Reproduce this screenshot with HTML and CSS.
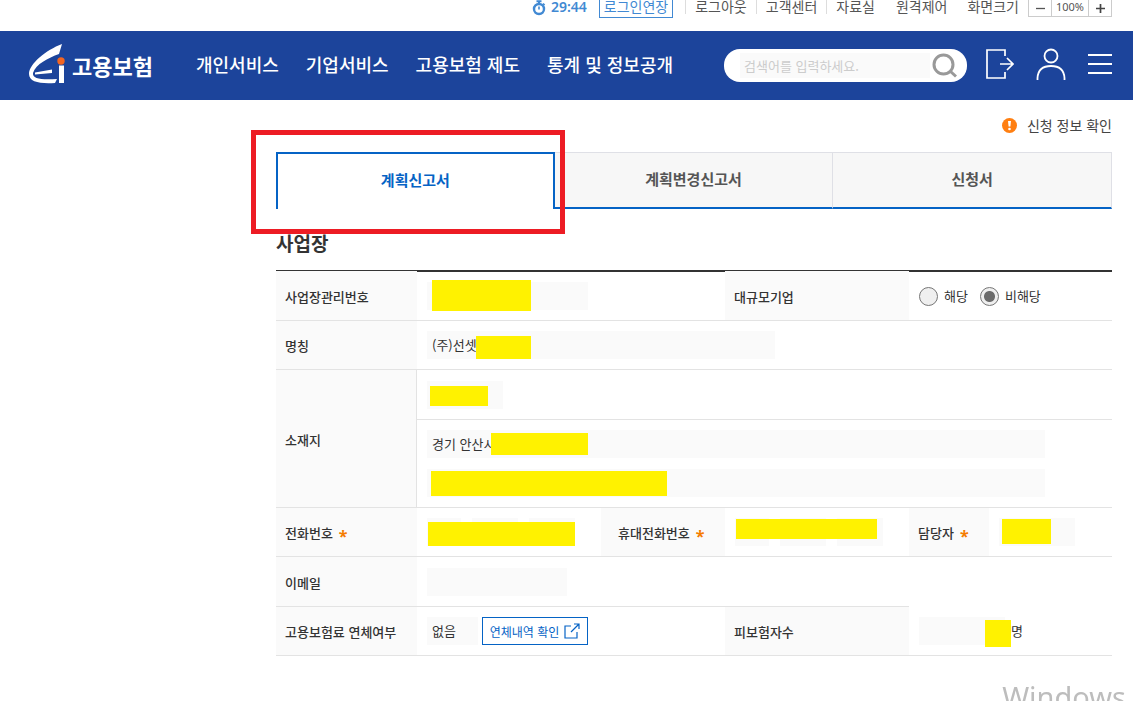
FILE: index.html
```html
<!DOCTYPE html>
<html lang="ko">
<head>
<meta charset="utf-8">
<meta name="viewport" content="width=device-width, initial-scale=1">
<title>고용보험 - 계획신고서</title>
<link rel="stylesheet" href="styles.css">
</head>
<body>
<div class="utility">
  <span class="timer">
    <svg width="14" height="16" viewBox="0 0 14 16" aria-hidden="true"><g fill="none" stroke="currentColor"><circle cx="7" cy="9" r="5" stroke-width="2.4"/><path d="M4.5 1.2h5M7 1v3" stroke-width="2"/><path d="M11 3.5l1.6 1.6" stroke-width="1.6"/><path d="M7 6.5V9.5" stroke-width="1.6"/></g></svg>
    29:44
  </span>
  <button type="button" class="extend">로그인연장</button>
  <ul class="utility-links">
    <li class="divided"><a href="#">로그아웃</a></li>
    <li class="divided"><a href="#">고객센터</a></li>
    <li class="divided"><a href="#">자료실</a></li>
    <li><a href="#">원격제어</a></li>
  </ul>
  <span class="size-label">화면크기</span>
  <div class="size-group">
    <button type="button" aria-label="축소"><svg width="9" height="9" viewBox="0 0 9 9"><path d="M0 4.5h9" stroke="#555" stroke-width="1.3"/></svg></button>
    <output>100%</output>
    <button type="button" aria-label="확대"><svg width="9" height="9" viewBox="0 0 9 9"><path d="M0 4.5h9M4.5 0v9" stroke="#444" stroke-width="1.7"/></svg></button>
  </div>
</div>

<header class="header">
  <a href="#" class="logo">
    <svg width="38" height="40" viewBox="0 0 38 40" aria-hidden="true">
      <path d="M34 0L31 10C20 14 8 20 5 29C4 35 14 36 29 35L27 39C12 40 1 38 1 30C1 20 18 6 34 0Z" fill="#fff"/>
      <path d="M7 28.500L24 25.500L24 29L7 30.500Z" fill="#fff"/>
      <path d="M31 21.500h5V39h-5z" fill="#fff"/>
      <circle cx="33" cy="17" r="3.700" fill="#f26522"/>
    </svg>
    <span>고용보험</span>
  </a>
  <nav class="nav">
    <a href="#">개인서비스</a>
    <a href="#">기업서비스</a>
    <a href="#">고용보험 제도</a>
    <a href="#">통계 및 정보공개</a>
  </nav>
  <form class="search">
    <input type="text" placeholder="검색어를 입력하세요." aria-label="검색어">
    <button type="button" aria-label="검색"><svg width="26" height="26" viewBox="0 0 26 26"><g fill="none" stroke="#999" stroke-width="3"><circle cx="11.500" cy="11.500" r="9.500"/><path d="M18 18l6 5.500"/></g></svg></button>
  </form>
  <div class="header-icons">
    <button type="button" aria-label="로그아웃"><svg width="28" height="30" viewBox="0 0 28 30"><path d="M19 7V1H1v28h18v-6M14 15h13M21 9l6 6-6 6" fill="none" stroke="#fff" stroke-width="1.700"/></svg></button>
    <button type="button" aria-label="마이페이지"><svg width="30" height="32" viewBox="0 0 30 32"><g fill="none" stroke="#fff" stroke-width="1.800"><circle cx="15" cy="8" r="6.500"/><path d="M1.500 32v-2C2 22 7 18 15 18s13 4 13.500 12v2"/></g></svg></button>
    <button type="button" aria-label="전체메뉴"><svg width="24" height="22" viewBox="0 0 24 22"><path d="M0 2h24M0 11h24M0 20h24" stroke="#fff" stroke-width="2"/></svg></button>
  </div>
</header>

<main class="content">
  <p class="notice">
    <svg width="15" height="15" viewBox="0 0 15 15" aria-hidden="true"><circle cx="7.500" cy="7.500" r="7.500" fill="#ff7f11"/><path d="M6 3h3l-.6 5.500H6.600z" fill="#fff"/><circle cx="7.500" cy="11" r="1.300" fill="#fff"/></svg>
    <a href="#">신청 정보 확인</a>
  </p>

  <div class="tabs" role="tablist">
    <div class="tab-slot highlighted"><button type="button" class="tab active" role="tab" aria-selected="true">계획신고서</button></div>
    <div class="tab-slot"><button type="button" class="tab" role="tab" aria-selected="false">계획변경신고서</button></div>
    <div class="tab-slot"><button type="button" class="tab" role="tab" aria-selected="false">신청서</button></div>
  </div>

  <h2 class="section-title">사업장</h2>

  <table class="form-table">
    <colgroup><col class="c-head"><col class="c-wide"><col class="c-mid"><col class="c-wide"><col class="c-small"><col></colgroup>
    <tbody>
      <tr class="first">
        <th scope="row"><label for="bizno">사업장관리번호</label></th>
        <td colspan="2"><span class="field w-bizno"><input id="bizno" type="text" readonly><i class="mark m-bizno"></i></span></td>
        <th scope="row">대규모기업</th>
        <td colspan="2">
          <div class="radios">
            <label><input type="radio" name="large">해당</label>
            <label><input type="radio" name="large" checked>비해당</label>
          </div>
        </td>
      </tr>
      <tr>
        <th scope="row"><label for="name">명칭</label></th>
        <td colspan="5"><span class="field w-name"><input id="name" type="text" value="(주)선셋" readonly><i class="mark m-name"></i></span></td>
      </tr>
      <tr class="tall">
        <th scope="row" rowspan="2" class="ruled"><label for="zip">소재지</label></th>
        <td colspan="5"><span class="field w-zip"><input id="zip" type="text" readonly><i class="mark m-zip"></i></span></td>
      </tr>
      <tr class="double">
        <td colspan="5">
          <div class="stack">
            <span class="field w-addr"><input type="text" value="경기 안산시" aria-label="주소" readonly><i class="mark m-addr"></i></span>
            <span class="field w-addr"><input type="text" aria-label="상세주소" readonly><i class="mark m-detail"></i></span>
          </div>
        </td>
      </tr>
      <tr>
        <th scope="row"><label for="tel">전화번호</label><span class="required">*</span></th>
        <td>
          <div class="phone">
            <span class="field w-p1"><input id="tel" type="text" readonly></span>
            <span class="field w-p2"><input type="text" aria-label="전화번호 가운데" readonly></span>
            <span class="field w-p2"><input type="text" aria-label="전화번호 끝" readonly></span>
            <i class="mark m-tel"></i>
          </div>
        </td>
        <th scope="row" class="indent"><label for="mobile">휴대전화번호</label><span class="required">*</span></th>
        <td>
          <div class="phone">
            <span class="field w-p1"><input id="mobile" type="text" readonly></span>
            <span class="field w-p2"><input type="text" aria-label="휴대전화 가운데" readonly></span>
            <span class="field w-p2"><input type="text" aria-label="휴대전화 끝" readonly></span>
            <i class="mark m-mobile"></i>
          </div>
        </td>
        <th scope="row"><label for="manager">담당자</label><span class="required">*</span></th>
        <td><span class="field w-zip"><input id="manager" type="text" readonly><i class="mark m-manager"></i></span></td>
      </tr>
      <tr class="tall">
        <th scope="row"><label for="email">이메일</label></th>
        <td colspan="3"><span class="field w-email"><input id="email" type="text" readonly></span></td>
        <td colspan="2" class="open"></td>
      </tr>
      <tr>
        <th scope="row"><label for="overdue">고용보험료 연체여부</label></th>
        <td colspan="2">
          <div class="inline">
            <span class="field w-overdue"><input id="overdue" type="text" value="없음" readonly></span>
            <button type="button" class="check">연체내역 확인
              <svg width="16" height="16" viewBox="0 0 16 16" aria-hidden="true"><path d="M7 3H1v12h12V9M10 1h5v5M15 1L7 9" fill="none" stroke="currentColor" stroke-width="1.200"/></svg>
            </button>
          </div>
        </td>
        <th scope="row"><label for="insured">피보험자수</label></th>
        <td colspan="2">
          <div class="insured">
            <span class="field w-insured"><input id="insured" type="text" readonly><i class="mark m-insured"></i></span>
            <span>명</span>
          </div>
        </td>
      </tr>
    </tbody>
  </table>
</main>
<div class="watermark">Windows</div>
</body>
</html>
```

FILE: styles.css
```css
* {
  box-sizing: border-box;
}

body {
  margin: 0;
  min-height: 100vh;
  overflow: hidden;
  background: #fff;
  color: #333;
  font-family: "Noto Sans CJK KR", sans-serif;
  font-size: 13px;
  line-height: 20px;
}

a {
  color: inherit;
  text-decoration: none;
}

button {
  padding: 0;
  border: 0;
  background: none;
  color: inherit;
  font-family: inherit;
  cursor: pointer;
}

svg {
  display: block;
}

/* Utility bar */
.utility {
  display: flex;
  justify-content: flex-end;
  height: 31px;
  padding-right: 21px;
  color: #555;
  font-size: 14px;
  line-height: 12px;
}

.timer {
  display: flex;
  gap: 5px;
  height: 16px;
  margin-right: 12px;
  color: #4189d3;
  font-family: "Noto Sans", sans-serif;
  font-weight: 600;
  line-height: 14px;
}

.extend {
  height: 18px;
  padding: 0 4px 5px;
  border: solid #4189d3;
  border-width: 0 1px 1px;
  color: #4189d3;
  font-size: 14px;
  line-height: 12px;
}

.utility-links {
  display: flex;
  margin: 0 20px 0 12px;
  padding: 0;
  list-style: none;
}

.utility-links li {
  height: 14px;
  padding-right: 9px;
}

.utility-links .divided {
  padding-left: 9px;
  border-left: 1px solid #ddd;
}

.utility-links li:last-child {
  padding: 0 0 0 12px;
}

.size-label {
  margin-right: 9px;
}

.size-group {
  display: flex;
  height: 17px;
  border: solid #ccc;
  border-width: 0 1px 1px;
}

.size-group button {
  display: grid;
  place-items: center;
  width: 22px;
}

.size-group output {
  width: 38px;
  border: solid #ccc;
  border-width: 0 1px;
  font-family: "Noto Sans", sans-serif;
  font-size: 11px;
  line-height: 13px;
  text-align: center;
}

/* Header */
.header {
  display: flex;
  align-items: center;
  height: 69px;
  padding: 0 21px 0 28px;
  background: #1c449b;
  color: #fff;
}

.logo {
  display: flex;
  align-items: center;
  gap: 6px;
  margin-right: 43px;
  padding-bottom: 4px;
  font-size: 22px;
  font-weight: 700;
}

.logo span {
  padding-top: 2px;
}

.nav {
  display: flex;
  gap: 27px;
  padding-bottom: 4px;
  font-size: 18px;
  font-weight: 500;
}

.search {
  display: flex;
  align-items: center;
  justify-content: space-between;
  width: 243px;
  height: 33px;
  margin-left: auto;
  padding: 0 9px 0 16px;
  border-radius: 16px;
  background: #fff;
}

.search input {
  width: 190px;
  height: 25px;
  padding: 0 4px;
  border: 0;
  background: #fafafa;
  font: inherit;
  font-size: 13px;
}

.search input::placeholder {
  color: #ccc;
}

.header-icons {
  display: flex;
  align-items: center;
  gap: 22px;
  margin-left: 19px;
  padding-bottom: 3px;
}

/* Content */
.content {
  padding: 15px 21px 0 276px;
}

.notice {
  display: flex;
  align-items: center;
  justify-content: flex-end;
  gap: 10px;
  margin: 0 0 17px;
  color: #444;
  font-size: 14px;
}

.tabs {
  display: flex;
}

.tab-slot {
  position: relative;
  flex: 1;
}

.tab {
  display: block;
  width: 100%;
  height: 57px;
  padding-bottom: 3px;
  border: solid #dfe0e6;
  border-width: 1px 1px 2px 0;
  border-bottom-color: #0563c5;
  background: #f7f7f7;
  color: #555;
  font-size: 15px;
  font-weight: 700;
}

.tab.active {
  padding-bottom: 5px;
  border: solid #0563c5;
  border-width: 2px 2px 0;
  background: #fff;
  color: #0563c5;
}

/* Frame around the highlighted tab */
.highlighted {
  z-index: 1;
}

.highlighted::after {
  content: "";
  position: absolute;
  inset: -22px -10px -25px -25px;
  border: 5px solid #ed1c24;
  pointer-events: none;
}

.section-title {
  margin: 24px 0 17px;
  font-size: 19px;
  line-height: 20px;
  font-weight: 700;
}

.form-table {
  width: 100%;
  table-layout: fixed;
  border-spacing: 0;
}

.c-head {
  width: 141px;
}

.c-wide {
  width: 184px;
}

.c-mid {
  width: 124px;
}

.c-small {
  width: 80px;
}

.form-table th,
.form-table td {
  height: 49px;
  padding: 0 0 0 10px;
  border-bottom: 1px solid #e3e3e3;
  text-align: left;
  vertical-align: middle;
}

.form-table th {
  padding: 2px 0 0 9px;
  background: #fafafa;
  font-weight: 500;
}

.form-table th.ruled {
  border-right: 1px solid #e3e3e3;
}

.form-table th.indent {
  padding-left: 17px;
}

.form-table td.open {
  border-bottom: 0;
}

.form-table .first th,
.form-table .first td {
  height: 51px;
  border-top: 2px solid #333;
}

.form-table .first th {
  border-top-width: 1px;
}

.form-table .tall td {
  height: 50px;
}

.form-table .double td {
  height: 88px;
}

.required {
  margin-left: 6px;
  color: #f57c00;
  font-family: "Noto Sans", sans-serif;
  font-size: 16px;
  font-weight: 700;
  line-height: 12px;
  vertical-align: -4px;
}

.field {
  display: block;
  position: relative;
}

.field input {
  display: block;
  width: 100%;
  height: 28px;
  padding: 0 0 2px 5px;
  border: 0;
  background: #fafafa;
  color: #333;
  font: inherit;
}

.stack {
  display: grid;
  gap: 11px;
}

.phone {
  display: flex;
  gap: 11px;
  position: relative;
}

.inline {
  display: flex;
  gap: 4px;
}

.insured {
  display: flex;
  align-items: center;
  gap: 6px;
}

.radios {
  display: flex;
  gap: 12px;
}

.radios label {
  display: flex;
  align-items: center;
  gap: 6px;
}

.radios input {
  appearance: none;
  width: 19px;
  height: 19px;
  margin: 0;
  border: 1px solid #767676;
  border-radius: 50%;
  background: #efefef;
}

.radios input:checked {
  background: radial-gradient(circle, #6b6b6b 5px, #efefef 6px);
}

.check {
  display: flex;
  align-items: center;
  justify-content: center;
  gap: 5px;
  width: 106px;
  height: 28px;
  border: 1px solid #0563c5;
  background: #fff;
  color: #0563c5;
  font-size: 12px;
}

.w-bizno { width: 161px; }
.w-name { width: 348px; }
.w-zip { width: 76px; }
.w-addr { width: 618px; }
.w-p1 { width: 34px; }
.w-p2 { width: 46px; }
.w-email { width: 140px; }
.w-overdue { width: 51px; }
.w-insured { width: 86px; }

/* Blocks covering private values */
.mark {
  position: absolute;
  background: #fff200;
}

.m-bizno { inset: -2px auto auto 5px; width: 99px; height: 31px; }
.m-name { inset: 5px auto auto 49px; width: 55px; height: 23px; }
.m-zip { inset: 5px auto auto 3px; width: 58px; height: 20px; }
.m-addr { inset: 3px auto auto 64px; width: 97px; height: 22px; }
.m-detail { inset: 2px auto auto 4px; width: 236px; height: 25px; }
.m-tel { inset: 4px auto auto 1px; width: 147px; height: 24px; }
.m-mobile { inset: 1px auto auto 1px; width: 141px; height: 20px; }
.m-manager { inset: 1px auto auto 3px; width: 49px; height: 25px; }
.m-insured { inset: 3px auto auto 66px; width: 26px; height: 27px; }

.watermark {
  position: fixed;
  right: 7px;
  bottom: -16px;
  color: #bdbdbd;
  font-family: "Noto Sans", sans-serif;
  font-size: 29px;
  line-height: 40px;
}
```
